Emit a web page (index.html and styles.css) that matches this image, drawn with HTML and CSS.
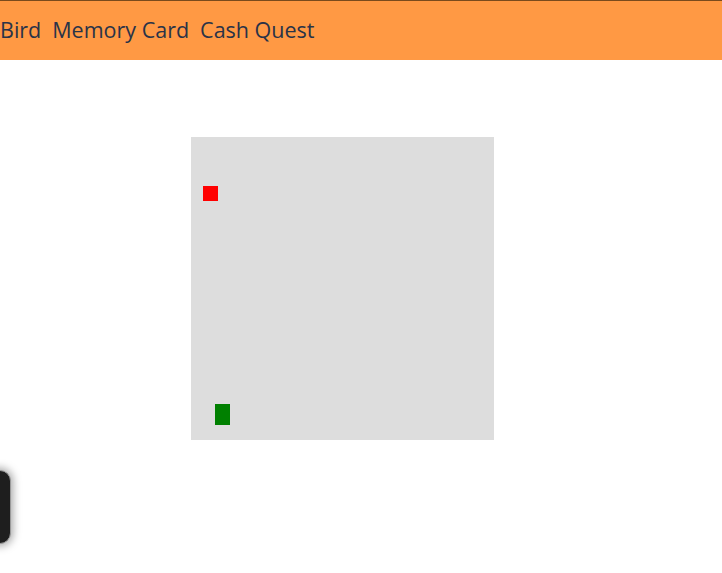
FILE: index.html
```html
<!DOCTYPE html>
<html>
<head>
<meta charset="utf-8">
<link rel="stylesheet" href="styles.css">
</head>
<body>
<header class="nav">
  <a class="nav-link">Bird</a>
  <a class="nav-link">Memory Card</a>
  <a class="nav-link">Cash Quest</a>
</header>
<main class="stage">
  <div class="board">
    <div class="piece red"></div>
    <div class="piece green"></div>
  </div>
</main>
<div class="dock"></div>
</body>
</html>
```
FILE: styles.css
```css
html, body {
  margin: 0;
  padding: 0;
  background: #ffffff;
}
.nav {
  height: 59px;
  border-top: 1px solid #7a4a1c;
  background: #ff9944;
  display: flex;
  align-items: center;
  gap: 11px;
  padding-left: 0;
  font-family: "Open Sans", "Noto Sans", sans-serif;
  font-size: 21.5px;
  color: #2a3348;
}
.nav-link {
  white-space: nowrap;
  margin-top: -3px;
}
.stage {
  padding: 77px 0 0 191px;
}
.board {
  position: relative;
  width: 303px;
  height: 303px;
  background: #dddddd;
}
.piece {
  position: absolute;
}
.red {
  left: 12px;
  top: 49px;
  width: 15px;
  height: 15px;
  background: #ff0000;
}
.green {
  left: 24px;
  top: 267px;
  width: 15px;
  height: 21px;
  background: #008000;
}
.dock {
  position: absolute;
  left: -60px;
  top: 470px;
  width: 69px;
  height: 72px;
  background: #1e1e1e;
  border: 1px solid #9a9a9a;
  border-radius: 11px;
  box-shadow: 0 0 8px 2px rgba(0,0,0,0.35);
}
```
